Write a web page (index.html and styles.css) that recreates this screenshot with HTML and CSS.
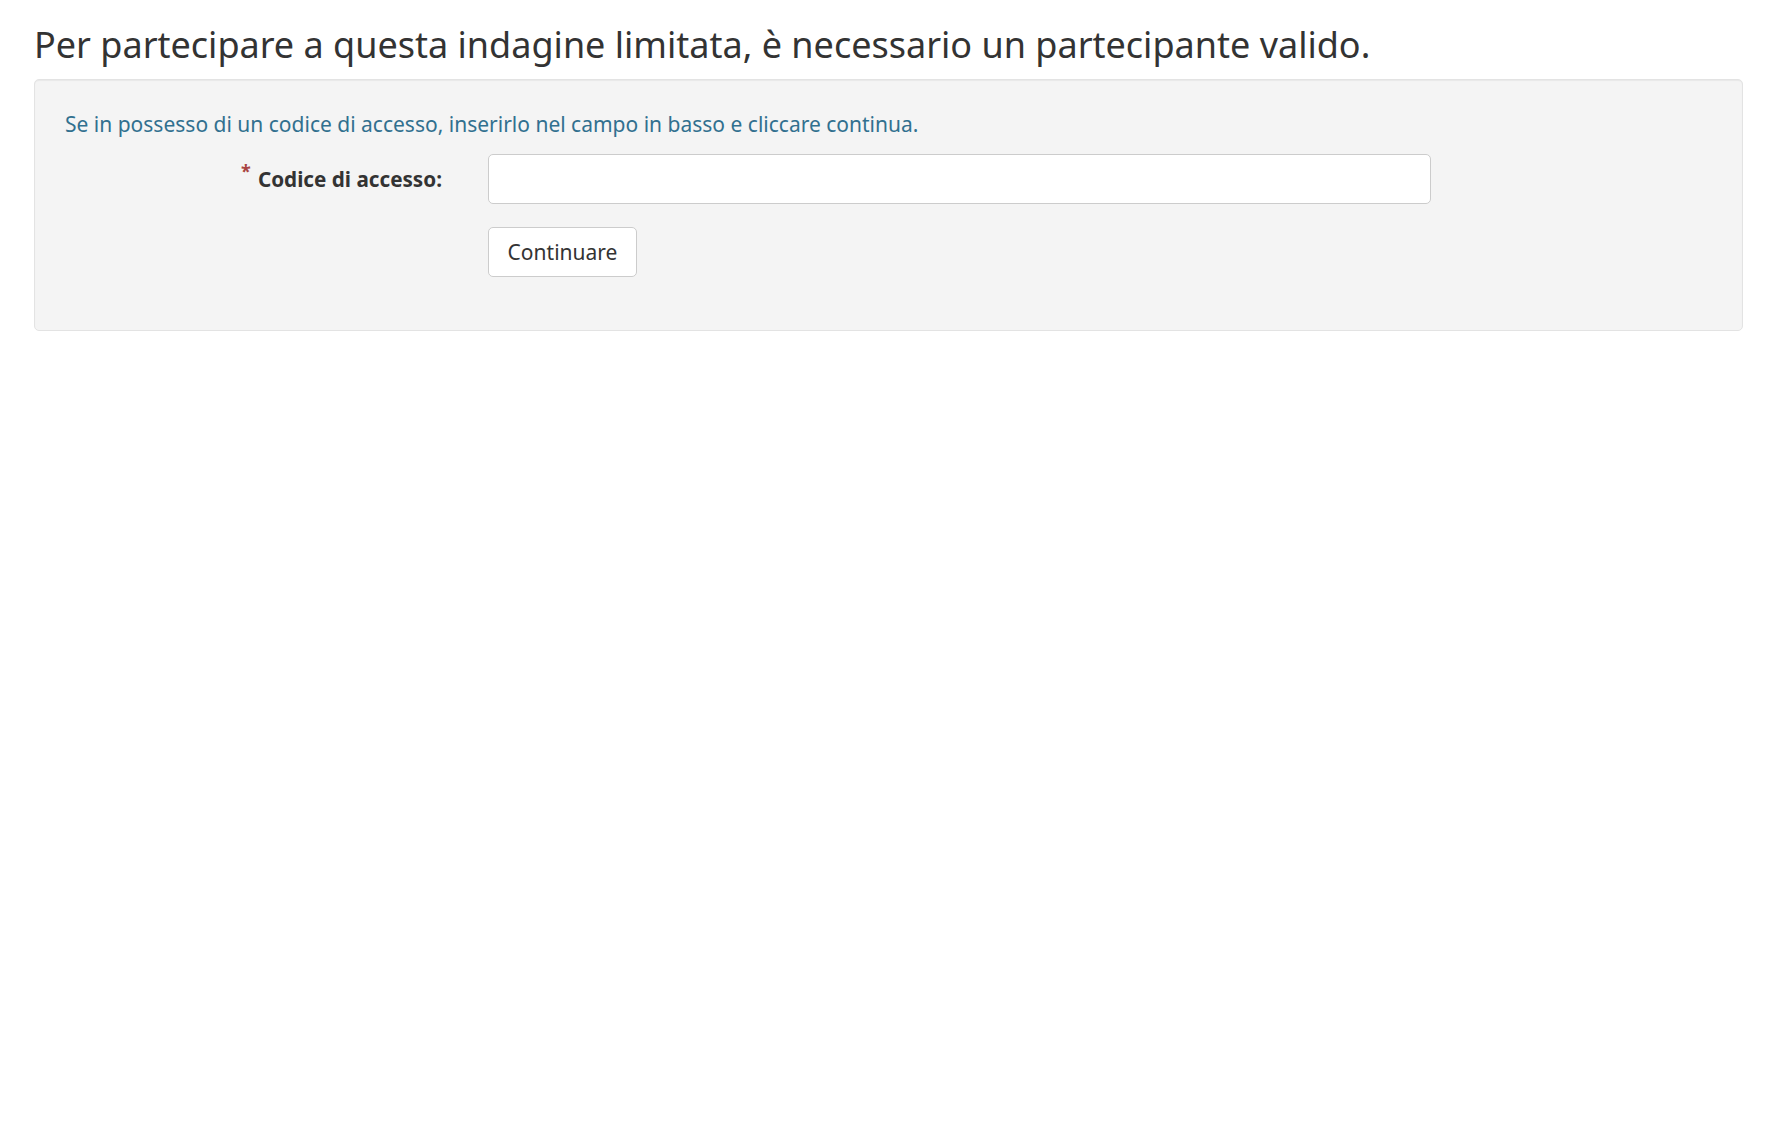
FILE: index.html
```html
<!DOCTYPE html>
<html>
<head>
 <title>Accesso indagine</title>
 <link rel="stylesheet" href="styles.css">
</head>
<body>
 <!-- main wrapper for the survey access page -->
 <div id="survey-container">
  <h1 class="survey-title">Per partecipare a questa indagine limitata, è necessario un partecipante valido.</h1>

  <!-- grey box with the token form -->
  <div class="survey-well">
   <p class="survey-intro">Se in possesso di un codice di accesso, inserirlo nel campo in basso e cliccare continua.</p>
   <form class="token-form">
    <label class="token-label" for="token-input"><span class="required-mark">*</span>Codice di accesso:</label>
    <input type="text" class="token-input" id="token-input">
    <div class="token-actions">
     <button type="button" class="survey-button">Continuare</button>
    </div>
   </form>
  </div>
 </div>
</body>
</html>
```

FILE: styles.css
```css
/* base page styling */
body {
 margin: 0;
 background-color: #ffffff;
 color: #333333;
 font-family: "Noto Sans", "Open Sans", sans-serif;
}

/* styling for the main wrapper */
#survey-container {
 padding: 0 31px 0 34px;
}

/* styling for the page title */
.survey-title {
 margin: 0;
 padding-top: 20px;
 height: 59px;
 font-size: 36px;
 font-weight: normal;
 line-height: 50px;
 color: #333333;
}

/* styling for the grey box */
.survey-well {
 box-sizing: border-box;
 height: 252px;
 padding: 29px 31px 0 30px;
 background-color: #f4f4f4;
 border: 1px solid #e3e3e3;
 border-radius: 5px;
 box-shadow: inset 0 1px 1px rgba(0, 0, 0, 0.05);
}

/* styling for the intro text */
.survey-intro {
 margin: 0 0 15px 0;
 font-size: 21px;
 line-height: 30px;
 color: #31708f;
}

/* styling for the token form */
.token-form {
 display: grid;
 grid-template-columns: 377px 943px;
 column-gap: 46px;
 row-gap: 23px;
}

/* styling for the label */
.token-label {
 align-self: center;
 text-align: right;
 font-size: 20.7px;
 font-weight: bold;
 line-height: 30px;
}

.required-mark {
 position: relative;
 top: -9px;
 margin-right: 7px;
 color: #a94442;
 font-size: 18px;
}

/* styling for the text input */
.token-input {
 box-sizing: border-box;
 height: 50px;
 padding: 6px 16px;
 background-color: #ffffff;
 border: 1px solid #cccccc;
 border-radius: 5px;
 font-family: inherit;
 font-size: 21px;
}

.token-actions {
 grid-column: 2;
}

/* styling for the button */
.survey-button {
 box-sizing: border-box;
 height: 50px;
 width: 149px;
 padding: 0;
 background-color: #ffffff;
 border: 1px solid #cccccc;
 border-radius: 5px;
 color: #333333;
 font-family: inherit;
 font-size: 21px;
 cursor: pointer;
}
```
